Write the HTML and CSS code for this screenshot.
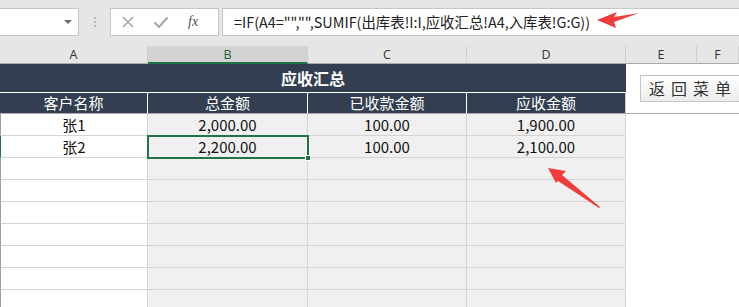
FILE: index.html
```html
<!DOCTYPE html>
<html>
<head>
<meta charset="utf-8">
<link rel="stylesheet" href="styles.css">
</head>
<body>
<div class="app">
  <div class="toolbar">
    <div class="namebox"><span class="caret"></span></div>
    <div class="grip"><i></i><i></i><i></i></div>
    <div class="btns">
      <svg class="ico" width="14" height="14" viewBox="0 0 14 14"><path d="M2 2 L12 12 M12 2 L2 12" stroke="#9b9b9b" stroke-width="1.4" fill="none"/></svg>
      <svg class="ico" width="16" height="14" viewBox="0 0 16 14"><path d="M1.5 7.5 L6 12 L14.5 2.5" stroke="#a6a6a6" stroke-width="2" fill="none"/></svg>
      <span class="fx">fx</span>
    </div>
    <div class="formula">=IF(A4="","",SUMIF(出库表!I:I,应收汇总!A4,入库表!G:G))</div>
  </div>
  <div class="sheet">
    <div class="ch">A</div>
    <div class="ch sel">B</div>
    <div class="ch">C</div>
    <div class="ch">D</div>
    <div class="ch">E</div>
    <div class="ch">F</div>

    <div class="title">应收汇总</div>
    <div class="blank top"></div>
    <div class="blank top"></div>

    <div class="hd">客户名称</div>
    <div class="hd">总金额</div>
    <div class="hd">已收款金额</div>
    <div class="hd last">应收金额</div>
    <div class="blank hdr"></div>
    <div class="blank hdr"></div>

    <div class="c a">张1</div>
    <div class="c g">2,000.00</div>
    <div class="c g">100.00</div>
    <div class="c g">1,900.00</div>
    <div class="blank"></div>
    <div class="blank"></div>

    <div class="c a rowsel">张2</div>
    <div class="c g active">2,200.00<span class="handle"></span></div>
    <div class="c g">100.00</div>
    <div class="c g">2,100.00</div>
    <div class="blank"></div>
    <div class="blank"></div>

    <div class="c a"></div><div class="c g"></div><div class="c g"></div><div class="c g"></div><div class="blank"></div><div class="blank"></div>
    <div class="c a"></div><div class="c g"></div><div class="c g"></div><div class="c g"></div><div class="blank"></div><div class="blank"></div>
    <div class="c a"></div><div class="c g"></div><div class="c g"></div><div class="c g"></div><div class="blank"></div><div class="blank"></div>
    <div class="c a"></div><div class="c g"></div><div class="c g"></div><div class="c g"></div><div class="blank"></div><div class="blank"></div>
    <div class="c a"></div><div class="c g"></div><div class="c g"></div><div class="c g"></div><div class="blank"></div><div class="blank"></div>
    <div class="c a"></div><div class="c g"></div><div class="c g"></div><div class="c g"></div><div class="blank"></div><div class="blank"></div>
    <div class="c a"></div><div class="c g"></div><div class="c g"></div><div class="c g"></div><div class="blank"></div><div class="blank"></div>

    <div class="menu-btn">返回菜单</div>
  </div>

  <svg class="arrow arrow1" width="50" height="24" viewBox="0 0 50 24">
    <polygon points="0,12 20,4 17,9 42,5 17,14 19,20" fill="#f03c3c"/>
  </svg>
  <svg class="arrow arrow2" width="60" height="46" viewBox="0 0 60 46">
    <polygon points="2,1 20,4 16,8 54,40 53,41 12,14 10,16" fill="#f03c3c"/>
  </svg>
</div>
</body>
</html>
```

FILE: styles.css
```css
* { box-sizing: border-box; }
html, body { margin: 0; padding: 0; }
body {
  width: 739px;
  height: 307px;
  overflow: hidden;
  background: #ffffff;
  font-family: "Noto Sans CJK SC", "Noto Sans", sans-serif;
}
.app { position: relative; width: 739px; height: 307px; overflow: hidden; }

.toolbar {
  height: 46px;
  background: #e6e6e6;
  display: flex;
  align-items: flex-start;
  padding-top: 8px;
}
.namebox {
  width: 79px;
  height: 28px;
  background: #fff;
  border: 1px solid #c6c6c6;
  border-left: none;
  position: relative;
}
.caret {
  position: absolute;
  right: 6px;
  top: 11px;
  width: 0; height: 0;
  border-left: 4px solid transparent;
  border-right: 4px solid transparent;
  border-top: 4px solid #6b6b6b;
}
.grip {
  width: 31px;
  height: 28px;
  display: flex;
  flex-direction: column;
  align-items: center;
  justify-content: center;
  gap: 2px;
}
.grip i { width: 2px; height: 2px; background: #b5b5b5; display: block; }
.btns {
  width: 109px;
  height: 28px;
  background: #fff;
  border: 1px solid #c6c6c6;
  display: flex;
  align-items: center;
  padding-left: 10px;
  gap: 18px;
}
.btns .ico { display: block; }
.fx {
  font-family: "Liberation Serif", serif;
  font-style: italic;
  font-size: 14px;
  color: #555;
  margin-left: 1px;
}
.formula {
  margin-left: 3px;
  flex: 1;
  height: 28px;
  background: #fff;
  border: 1px solid #c6c6c6;
  border-right: none;
  padding-left: 11px;
  font-size: 14.4px;
  line-height: 25px;
  color: #222;
  white-space: nowrap;
}

.sheet {
  display: grid;
  grid-template-columns: 148px 160px 159px 159px 71px 1fr;
  grid-template-rows: 18px 29px 21px repeat(9, 22px);
  position: relative;
}
.ch {
  background: #e6e6e6;
  border-right: 1px solid #cfcfcf;
  border-bottom: 1px solid #a9a9a9;
  font-family: "Open Sans", "Noto Sans", sans-serif;
  font-size: 12.5px;
  color: #333;
  text-align: center;
  line-height: 17px;
}
.ch.sel {
  background: #d3d3d3;
  border-bottom: 2px solid #217346;
  color: #1f5e37;
}
.title {
  grid-column: 1 / span 4;
  background: #333f50;
  color: #fff;
  font-weight: bold;
  font-size: 16px;
  text-align: center;
  line-height: 28px;
  border-bottom: 1px solid #fff;
}
.hd {
  background: #333f50;
  color: #fff;
  font-size: 15px;
  text-align: center;
  line-height: 20px;
  border-right: 1px solid #fff;
  border-bottom: 1px solid #a9a9a9;
}
.hd.last { border-right: 1px solid #c8c8c8; }
.blank { background: #fff; }
.blank.hdr { border-bottom: 1px solid #a9a9a9; }
.c {
  border-right: 1px solid #d4d4d4;
  border-bottom: 1px solid #d4d4d4;
  font-size: 15px;
  color: #111;
  text-align: center;
  line-height: 21px;
  position: relative;
}
.c.a { background: #fff; border-left: 1px solid #9e9e9e; }
.c.g { background: #f0f0f0; }
.c.rowsel { border-left: 1px solid #217346; }
.c.active { outline: 2px solid #217346; outline-offset: -1px; z-index: 1; }
.handle {
  position: absolute;
  right: -4px;
  bottom: -4px;
  width: 6px;
  height: 6px;
  background: #217346;
  border: 1px solid #fff;
}
.menu-btn {
  position: absolute;
  left: 640px;
  top: 29px;
  width: 110px;
  height: 27px;
  border: 1px solid #c4c4c4;
  background: linear-gradient(#ffffff, #ececec);
  font-size: 16px;
  letter-spacing: 6px;
  color: #333;
  line-height: 25px;
  padding-left: 8px;
  white-space: nowrap;
}
.arrow { position: absolute; }
.arrow1 { left: 597px; top: 8px; }
.arrow2 { left: 546px; top: 167px; }
```
